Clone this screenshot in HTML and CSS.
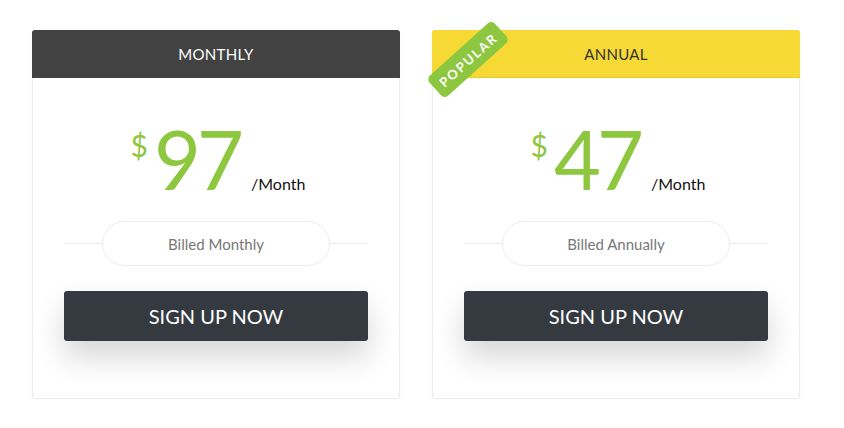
FILE: index.html
```html
<!DOCTYPE html>
<html>
<head>
<meta charset="utf-8">
<link rel="stylesheet" href="styles.css">
</head>
<body>
<div class="plans">
  <div class="card">
    <div class="card-head dark">MONTHLY</div>
    <div class="card-body">
      <div class="price"><span class="cur">$</span><span class="amount">97</span><span class="per">/Month</span></div>
      <div class="billed"><span class="line"></span><span class="pill">Billed Monthly</span><span class="line"></span></div>
      <a class="btn" href="#">SIGN UP NOW</a>
    </div>
  </div>
  <div class="card">
    <div class="ribbon">POPULAR</div>
    <div class="card-head yellow">ANNUAL</div>
    <div class="card-body">
      <div class="price"><span class="cur">$</span><span class="amount">47</span><span class="per">/Month</span></div>
      <div class="billed"><span class="line"></span><span class="pill">Billed Annually</span><span class="line"></span></div>
      <a class="btn" href="#">SIGN UP NOW</a>
    </div>
  </div>
</div>
</body>
</html>
```
FILE: styles.css
```css
* { box-sizing: border-box; }
body {
  margin: 0;
  background: #fff;
  font-family: "Lato", "Liberation Sans", sans-serif;
}
.plans {
  display: flex;
  gap: 32px;
  padding: 30px 0 0 32px;
}
.card {
  position: relative;
  width: 368px;
  height: 369px;
  background: #fff;
  border: 1px solid #ececec;
  border-radius: 3px;
  box-shadow: 0 0 4px rgba(0,0,0,0.03);
}
.card-head {
  height: 48px;
  display: flex;
  align-items: center;
  justify-content: center;
  font-size: 15px;
  letter-spacing: 0.3px;
  border-radius: 3px 3px 0 0;
  margin: -1px -1px 0 -1px;
}
.card-head.dark { background: #424242; color: #fff; }
.card-head.yellow { background: #f6d935; color: #333; border-bottom: 1px solid #e8c92a; }
.card-body {
  padding: 0 31px;
}
.price {
  display: flex;
  justify-content: center;
  align-items: baseline;
  height: 136px;
  padding-top: 40px;
  padding-left: 4px;
  color: #8dc63f;
}
.cur {
  font-size: 30px;
  align-self: flex-start;
  margin-top: 9px;
  margin-right: 6px;
}
.amount {
  font-size: 81px;
  font-weight: 400;
  line-height: 1;
  letter-spacing: -4px;
}
.per {
  font-size: 16px;
  color: #111;
  margin-left: 11px;
}
.billed {
  display: flex;
  align-items: center;
  margin-top: 7px;
}
.line {
  flex: 1;
  height: 1px;
  background: #ececec;
}
.pill {
  width: 228px;
  height: 45px;
  border: 1px solid #ececec;
  border-radius: 23px;
  display: flex;
  align-items: center;
  justify-content: center;
  font-size: 15px;
  color: #777;
}
.btn {
  display: flex;
  align-items: center;
  justify-content: center;
  height: 50px;
  margin-top: 25px;
  background: #343a40;
  color: #fff;
  text-decoration: none;
  font-size: 20px;
  border-radius: 3px;
  box-shadow: 0 16px 30px rgba(0,0,0,0.16);
}
.ribbon {
  position: absolute;
  left: -9px;
  top: 15px;
  width: 88px;
  height: 27px;
  background: #8dc63f;
  color: #fff;
  font-size: 13px;
  font-weight: 700;
  letter-spacing: 1.8px;
  display: flex;
  align-items: center;
  justify-content: center;
  border-radius: 5px;
  transform: rotate(-42deg);
  z-index: 2;
}
```
